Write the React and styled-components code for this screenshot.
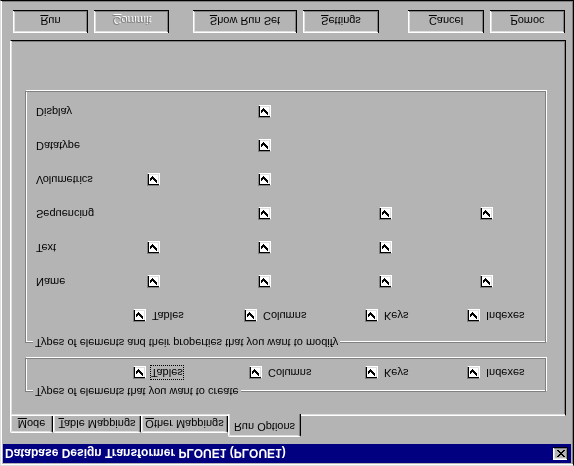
import React from 'react';
import styled, { createGlobalStyle } from 'styled-components';

const FACE = '#b4b4b4';

const Global = createGlobalStyle`
  html, body { margin: 0; padding: 0; background: ${FACE}; }
  body { font-family: "Liberation Sans", Arial, sans-serif; font-size: 11px; color: #000; }
`;

/* The reference is a vertically mirrored dialog: the window is laid out normally and mirrored once. */
const Window = styled.div`
  box-sizing: border-box;
  width: 574px;
  height: 466px;
  padding: 2px;
  background: ${FACE};
  border: 1px solid;
  border-color: #dfdfdf #000 #000 #dfdfdf;
  box-shadow: inset 1px 1px #fff, inset -1px -1px #808080;
  display: flex;
  flex-direction: column;
  transform: scaleY(-1);
`;

const TitleBar = styled.div`
  height: 19px;
  flex: none;
  background: #000080;
  display: flex;
  align-items: center;
  justify-content: space-between;
  padding: 0 3px 0 2px;
`;

const TitleText = styled.span`
  color: #fff;
  font-weight: bold;
  font-size: 12px;
  white-space: nowrap;
`;

const CloseButton = styled.button`
  box-sizing: border-box;
  width: 15px;
  height: 13px;
  padding: 0;
  border: none;
  background: ${FACE};
  display: flex;
  align-items: center;
  justify-content: center;
  box-shadow: inset -1px -1px #000, inset 1px 1px #fff, inset -2px -2px #808080, inset 2px 2px #dfdfdf;
`;

const TabStrip = styled.div`
  display: flex;
  align-items: flex-end;
  height: 21px;
  margin-top: 7px;
  padding-left: 7px;
  position: relative;
  z-index: 1;
  flex: none;
`;

const Tab = styled.div`
  box-sizing: border-box;
  width: ${p => p.$w}px;
  height: ${p => (p.$active ? 23 : 17)}px;
  margin-bottom: ${p => (p.$active ? -2 : 0)}px;
  padding-top: ${p => (p.$active ? 3 : 2)}px;
  background: ${FACE};
  border-top: 1px solid #fff;
  border-left: 1px solid #fff;
  border-right: 1px solid #000;
  border-radius: 2px 2px 0 0;
  box-shadow: inset -1px 0 #808080, inset 1px 1px #dfdfdf;
  text-align: center;
  line-height: 13px;
  white-space: nowrap;
`;

const Panel = styled.div`
  box-sizing: border-box;
  width: 556px;
  height: 376px;
  margin-left: 7px;
  flex: none;
  border: 1px solid;
  border-color: #fff #000 #000 #fff;
  box-shadow: inset 1px 1px #dfdfdf, inset -1px -1px #808080;
  padding: 23px 0 0 14px;
  display: flex;
  flex-direction: column;
  gap: 15px;
`;

const Group = styled.div`
  position: relative;
  box-sizing: border-box;
  width: 521px;
  height: ${p => p.$h}px;
  border: 1px solid #808080;
  box-shadow: 1px 1px 0 #fff, inset 1px 1px 0 #fff;
  padding: ${p => p.$pt}px 0 0 10px;
`;

const Legend = styled.span`
  position: absolute;
  top: -7px;
  left: 7px;
  padding: 0 2px;
  background: ${FACE};
  line-height: 13px;
  white-space: nowrap;
`;

const Row = styled.div`
  display: grid;
  grid-template-columns: ${p => p.$cols};
  height: 34px;
  align-items: center;
`;

const RowLabel = styled.span`
  white-space: nowrap;
`;

const CheckItem = styled.label`
  display: inline-flex;
  align-items: center;
  gap: ${p => (p.$focus ? 4 : 6)}px;
  white-space: nowrap;
`;

const Focus = styled.span`
  border: 1px dotted #000;
  line-height: 13px;
  padding: 0;
`;

const Box = styled.span`
  display: inline-block;
  box-sizing: border-box;
  width: 13px;
  height: 13px;
  flex: none;
  background: #fff;
  border: 1px solid;
  border-color: #808080 #fff #fff #808080;
  box-shadow: inset 1px 1px #000, inset -1px -1px #dfdfdf;
  svg { display: block; }
`;

const ButtonRow = styled.div`
  display: flex;
  margin-top: 7px;
  padding-left: 10px;
  flex: none;
`;

const Button = styled.button`
  box-sizing: border-box;
  width: ${p => p.$w}px;
  height: 23px;
  margin-left: ${p => p.$ml || 0}px;
  padding: 0;
  border: none;
  background: ${FACE};
  font-family: "Liberation Sans", Arial, sans-serif;
  font-size: 11px;
  color: ${p => (p.disabled ? '#808080' : '#000')};
  text-shadow: ${p => (p.disabled ? '1px 1px 0 #fff' : 'none')};
  box-shadow: inset -1px -1px #000, inset 1px 1px #fff, inset -2px -2px #808080, inset 2px 2px #dfdfdf;
  white-space: nowrap;
`;

const checkCols = [
  [2, 4], [3, 5], [4, 6], [5, 5], [6, 4], [7, 3], [8, 2],
];
const checkPath = checkCols.map(([x, y]) => `M${x} ${y}h1v3h-1z`).join(' ');

const Check = () => (
  <Box>
    <svg width="11" height="11" viewBox="0 0 11 11" shapeRendering="crispEdges">
      <path d={checkPath} fill="#000" />
    </svg>
  </Box>
);

const CloseIcon = () => (
  <svg width="8" height="7" viewBox="0 0 8 7" shapeRendering="crispEdges">
    <path
      d="M0 0h2v1h-2z M6 0h2v1h-2z M1 1h2v1h-2z M5 1h2v1h-2z M2 2h4v1h-4z M3 3h2v1h-2z M2 4h4v1h-4z M1 5h2v1h-2z M5 5h2v1h-2z M0 6h2v1h-2z M6 6h2v1h-2z"
      fill="#000"
    />
  </svg>
);

const ELEMENTS = ['Tables', 'Columns', 'Keys', 'Indexes'];

const PROPS = [
  ['Name', [1, 1, 1, 1]],
  ['Text', [1, 1, 1, 0]],
  ['Sequencing', [0, 1, 1, 1]],
  ['Volumetrics', [1, 1, 0, 0]],
  ['Datatype', [0, 1, 0, 0]],
  ['Display', [0, 1, 0, 0]],
];

const TABS = [
  { label: 'Mode', key: 'M', w: 43 },
  { label: 'Table Mappings', key: 'T', w: 88 },
  { label: 'Other Mappings', key: 'O', w: 87 },
  { label: 'Run Options', w: 73, active: true },
];

const Mnemonic = ({ text, k }) => {
  if (!k) return text;
  const i = text.indexOf(k);
  return (
    <>
      {text.slice(0, i)}
      <u>{text[i]}</u>
      {text.slice(i + 1)}
    </>
  );
};

export default function App() {
  return (
    <>
      <Global />
      <Window>
        <TitleBar>
          <TitleText>Database Design Transformer PLOUE1 (PLOUE1)</TitleText>
          <CloseButton aria-label="Close">
            <CloseIcon />
          </CloseButton>
        </TitleBar>

        <TabStrip>
          {TABS.map(t => (
            <Tab key={t.label} $w={t.w} $active={t.active}>
              <Mnemonic text={t.label} k={t.key} />
            </Tab>
          ))}
        </TabStrip>

        <Panel>
          <Group $h={34} $pt={1}>
            <Legend>Types of elements that you want to create</Legend>
            <Row $cols="97px 116px 116px 102px auto">
              <span />
              {ELEMENTS.map((e, i) => (
                <CheckItem key={e} $focus={i === 0}>
                  <Check />
                  {i === 0 ? <Focus>{e}</Focus> : e}
                </CheckItem>
              ))}
            </Row>
          </Group>

          <Group $h={252} $pt={9}>
            <Legend>Types of elements and their properties that you want to modify</Legend>
            <Row $cols="97px 111px 121px 102px auto">
              <span />
              {ELEMENTS.map(e => (
                <CheckItem key={e}>
                  <Check />
                  {e}
                </CheckItem>
              ))}
            </Row>
            {PROPS.map(([name, flags]) => (
              <Row key={name} $cols="111px 111px 121px 101px auto">
                <RowLabel>{name}</RowLabel>
                {flags.map((f, i) => (f ? <Check key={i} /> : <span key={i} />))}
              </Row>
            ))}
          </Group>
        </Panel>

        <ButtonRow>
          <Button $w={75}><u>R</u>un</Button>
          <Button $w={75} $ml={6} disabled><u>C</u>ommit</Button>
          <Button $w={104} $ml={24}><u>S</u>how Run Set</Button>
          <Button $w={76} $ml={6}><u>S</u>ettings</Button>
          <Button $w={76} $ml={29}><u>C</u>ancel</Button>
          <Button $w={75} $ml={6}><u>P</u>omoc</Button>
        </ButtonRow>
      </Window>
    </>
  );
}
